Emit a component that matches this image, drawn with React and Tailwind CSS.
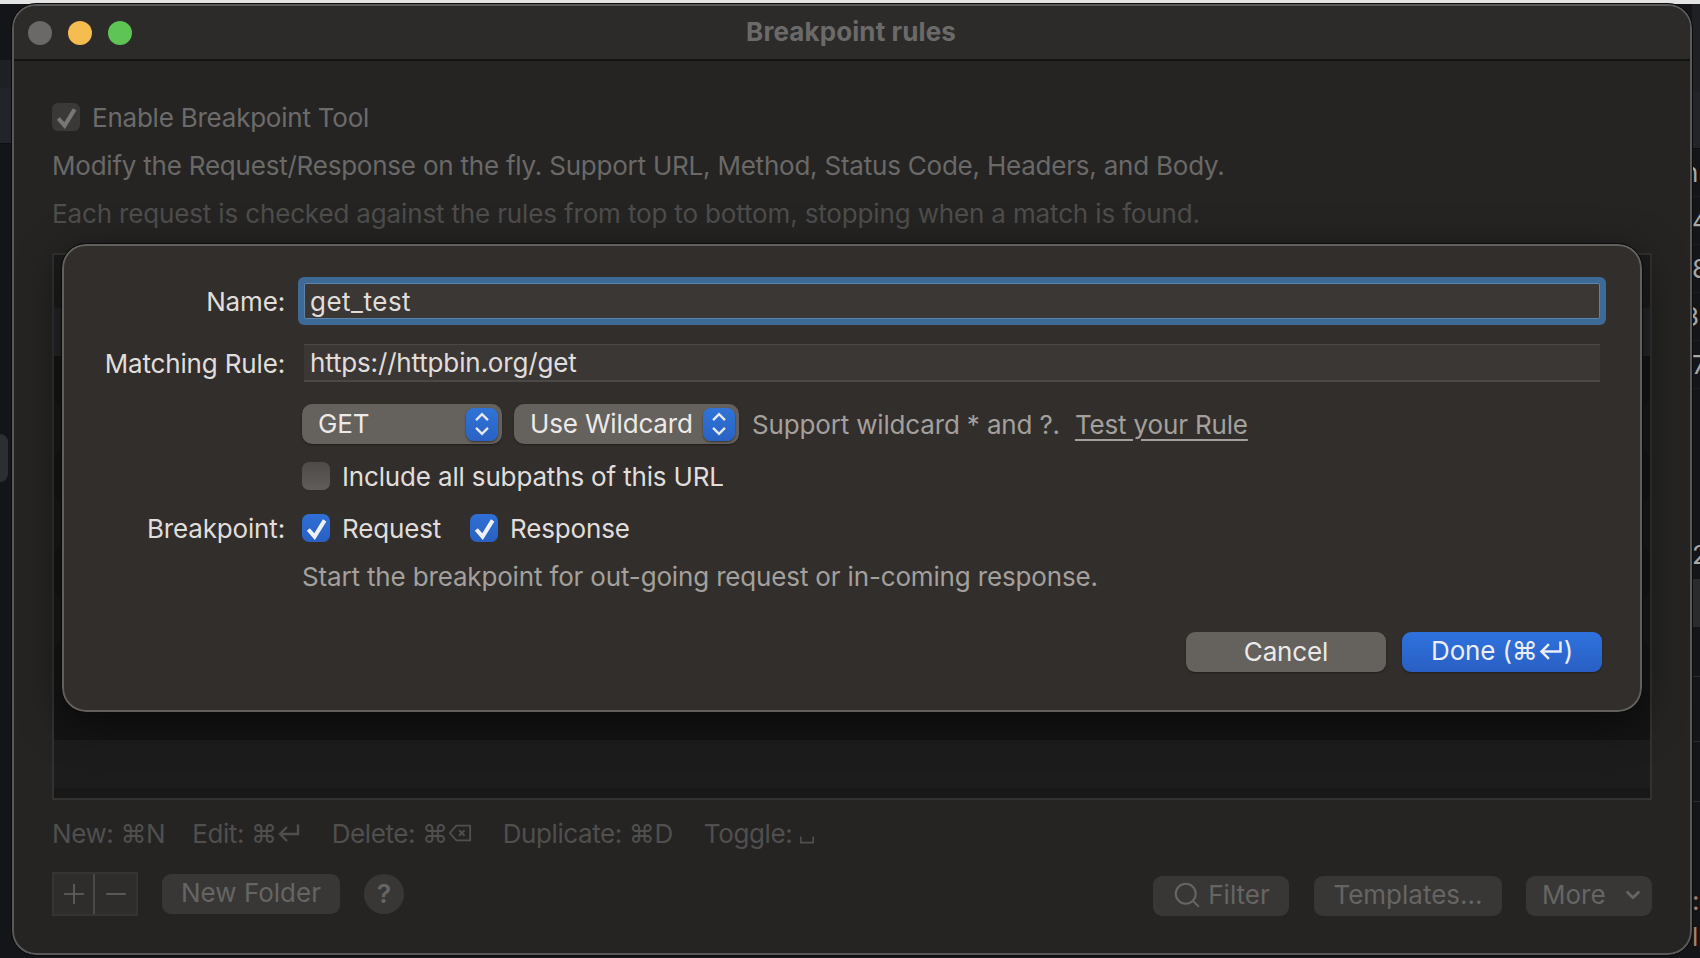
import { Search, ChevronDown, Plus, Minus } from 'lucide-react';

// Small return arrow, used in the shortcut hints and in the Done button
function ReturnKey({ className }) {
  return (
    <svg viewBox="0 0 24 20" className={className} fill="none" stroke="currentColor" strokeWidth="2.4">
      <path d="M21 1.500V11H4" />
      <path d="M10 4l-7 7 7 7" />
    </svg>
  );
}

function DeleteKey({ className }) {
  return (
    <svg viewBox="0 0 26 20" className={className} fill="none" stroke="currentColor" strokeWidth="2">
      <path d="M9 2h15v16H9L2 10z" />
      <path d="M12 7l6 6M18 7l-6 6" />
    </svg>
  );
}

function SpaceKey({ className }) {
  return (
    <svg viewBox="0 0 18 10" className={className} fill="none" stroke="currentColor" strokeWidth="2">
      <path d="M1 1v8h16V1" />
    </svg>
  );
}

// macOS style tick, taller than the lucide one
function Tick({ className }) {
  return (
    <svg viewBox="0 0 24 24" className={className} fill="none" stroke="currentColor" strokeWidth="4.2">
      <path d="M3.500 13L10 20.500L20.500 3.500" />
    </svg>
  );
}

function Arrows() {
  return (
    <span className="flex items-center justify-center w-[32px] h-[33px] rounded-[8px] bg-gradient-to-b from-[#2f74d8] to-[#2a62c4] shadow-[0_1px_2px_rgba(0,0,0,0.5)]">
      <svg viewBox="0 0 16 24" className="w-[18px] h-[26px]" fill="none" stroke="#e8e8e8" strokeWidth="2.200">
        <path d="M2.500 8.500L8 3l5.500 5.500" />
        <path d="M2.500 15.500L8 21l5.500-5.500" />
      </svg>
    </span>
  );
}

function Select({ label, className }) {
  return (
    <div className={`flex items-center justify-between h-[40px] rounded-[10px] bg-[#65615d] pl-[16px] pr-[4px] text-[#eceae8] shadow-[0_1px_2px_rgba(0,0,0,0.4)] ${className}`}>
      <span className="pb-[2px]">{label}</span>
      <Arrows />
    </div>
  );
}

function BlueCheck() {
  return (
    <span className="flex items-center justify-center w-[28px] h-[28px] rounded-[7px] bg-gradient-to-b from-[#2f6fd6] to-[#2a60c2]">
      <Tick className="w-[23px] h-[23px] text-[#eef1f6]" />
    </span>
  );
}

function Row({ label, children, className }) {
  return (
    <div className={`flex items-center ${className}`}>
      <div className="w-[221px] shrink-0 text-right text-[#e0dedc]">{label}</div>
      <div className="flex items-center flex-1 pl-[17px]">{children}</div>
    </div>
  );
}

function RuleSheet() {
  return (
    <div className="absolute left-[48px] top-[238px] w-[1580px] h-[468px] rounded-[24px] bg-[#322e2b] border-2 border-[#62605d] outline-1 outline-[#0b0b0b] shadow-[0_10px_40px_rgba(0,0,0,0.55)] text-[26px] tracking-[-0.16px] text-[#e0dedc]">
      <Row label="Name:" className="mt-[37px] h-[36px]">
        <div className="ml-[2px] w-[1296px] h-[36px] flex items-center px-[5px] bg-[#3b3734] border-[1.500px] border-[#5c84aa] ring-[6px] ring-[#3d6a96] rounded-[2px] tracking-[0.5px]">
          get_test
        </div>
      </Row>
      <Row label="Matching Rule:" className="mt-[25px] h-[38px]">
        <div className="ml-[2px] w-[1296px] h-[38px] flex items-center px-[6px] bg-[#3b3734] border-t border-b-2 border-[#4b4845]">
          https://httpbin.org/get
        </div>
      </Row>
      <Row className="mt-[22px] h-[40px]">
        <Select label="GET" className="w-[200px]" />
        <Select label="Use Wildcard" className="w-[225px] ml-[12px]" />
        <span className="ml-[13px] text-[#a3a09d]">Support wildcard * and ?.</span>
        <a className="ml-[15px] text-[#a3a09d] underline underline-offset-[5px] decoration-2">Test your Rule</a>
      </Row>
      <Row className="mt-[18px] h-[28px]">
        <span className="w-[28px] h-[28px] rounded-[7px] bg-gradient-to-b from-[#4d4a47] to-[#5f5c59]" />
        <span className="ml-[12px]">Include all subpaths of this URL</span>
      </Row>
      <Row label="Breakpoint:" className="mt-[24px] h-[28px]">
        <BlueCheck />
        <span className="ml-[12px]">Request</span>
        <span className="ml-[29px]"><BlueCheck /></span>
        <span className="ml-[12px]">Response</span>
      </Row>
      <Row className="mt-[18px] h-[32px]">
        <span className="text-[#a3a09d]">Start the breakpoint for out-going request or in-coming response.</span>
      </Row>
      <div className="flex justify-end gap-[16px] mt-[40px] pr-[38px]">
        <button className="w-[200px] h-[40px] pb-[3px] rounded-[9px] bg-[#65615d] text-[#eceae8] shadow-[0_1px_2px_rgba(0,0,0,0.4)]">Cancel</button>
        <button className="flex items-center justify-center w-[200px] h-[40px] pb-[3px] rounded-[9px] bg-gradient-to-b from-[#2f72de] to-[#295fc4] text-[#eceef3] shadow-[0_1px_2px_rgba(0,0,0,0.4)]">
          Done (⌘<ReturnKey className="w-[26px] h-[21px]" />)
        </button>
      </div>
    </div>
  );
}

function Hint({ label, children, className }) {
  return (
    <span className={`flex items-center ${className}`}>
      {label}: {children}
    </span>
  );
}

function ToolButton({ children, className }) {
  return (
    <button className={`flex items-center h-[40px] rounded-[9px] bg-[#383736] text-[#666564] ${className}`}>
      {children}
    </button>
  );
}

const rowShades = ['bg-[#242627]', 'bg-[#151616]', 'bg-[#181919]', 'bg-[#151616]', 'bg-[#181919]', 'bg-[#151616]', 'bg-[#181919]', 'bg-[#151616]', 'bg-[#141414]'];

function RulesTable() {
  return (
    <div className="mt-[16px] h-[547px] border-2 border-[#333231] bg-[#1a1a1a] flex flex-col overflow-hidden">
      <div className="h-[53px] shrink-0 bg-[#1c1c1c]" />
      {rowShades.map((shade, i) => (
        <div key={i} className={`h-[48px] shrink-0 ${shade}`} />
      ))}
      <div className="h-[48px] shrink-0 bg-[#1c1c1c]" />
      <div className="flex-1 bg-[#181818]" />
    </div>
  );
}

// Slivers of the app that sits behind the window
const rightDigits = [
  { text: 'n', indent: '-indent-[9px]' },
  { text: '4', indent: 'indent-0' },
  { text: '8', indent: 'indent-0' },
  { text: '3', indent: '-indent-[9px]' },
  { text: '7', indent: 'indent-0' },
];

export default function App() {
  return (
    <div className="w-[1700px] h-[958px] overflow-hidden bg-[#131518] font-['Inter',sans-serif]">
      <div className="h-[4px] bg-[#e4e4e4]" />
      <div className="flex h-[954px]">
        {/* Left sliver */}
        <div className="w-[12px] shrink-0 flex flex-col">
          <div className="h-[56px]" />
          <div className="h-[28px] bg-[#1e2024]" />
          <div className="h-[56px] bg-[#22242a] border-b border-[#0e0f11] text-[#8a8a8a] text-[26px] leading-[56px] -indent-[12px] overflow-hidden">t</div>
          <div className="h-[290px]" />
          <div className="w-[8px] h-[48px] rounded-r-[8px] bg-[#2d2e30]" />
        </div>

        {/* Window */}
        <div className="relative w-[1680px] h-[951px] shrink-0 rounded-[24px] border-2 border-[#5a5958] outline-1 outline-[#0b0b0b] bg-[#252423] overflow-hidden">
          <div className="flex items-center h-[55px] pl-[14px] gap-[16px] bg-[#2c2b2a] border-b-2 border-[#131312]">
            <span className="w-[24px] h-[24px] rounded-full bg-[#6a6968]" />
            <span className="w-[24px] h-[24px] rounded-full bg-[#f5bd4f]" />
            <span className="w-[24px] h-[24px] rounded-full bg-[#5ec454]" />
            <span className="flex-1 text-center -ml-[136px] pb-[3px] text-[26px] font-bold tracking-[0.1px] text-[#6b6a69]">Breakpoint rules</span>
          </div>

          <div className="px-[38px] pt-[32px] text-[26px]">
            <div className="flex items-center h-[48px] text-[#6c6b6a] tracking-[-0.23px]">
              <span className="flex items-center justify-center w-[28px] h-[28px] rounded-[6px] bg-[#3a3938]">
                <Tick className="w-[23px] h-[23px] text-[#787776]" />
              </span>
              <span className="ml-[12px]">Enable Breakpoint Tool</span>
            </div>
            <div className="flex items-center h-[48px] text-[#6a6968] tracking-[-0.22px]">
              Modify the Request/Response on the fly. Support URL, Method, Status Code, Headers, and Body.
            </div>
            <div className="flex items-center h-[48px] text-[#4e4d4c] tracking-[-0.15px]">
              Each request is checked against the rules from top to bottom, stopping when a match is found.
            </div>

            <RulesTable />

            <div className="flex items-center h-[48px] mt-[9px] text-[#504f4e] tracking-[-0.4px]">
              <Hint label="New">⌘N</Hint>
              <Hint label="Edit" className="ml-[27px]">⌘<ReturnKey className="w-[24px] h-[20px]" /></Hint>
              <Hint label="Delete" className="ml-[31px]">⌘<DeleteKey className="w-[24px] h-[20px]" /></Hint>
              <Hint label="Duplicate" className="ml-[31px]">⌘D</Hint>
              <Hint label="Toggle" className="ml-[31px]"><SpaceKey className="w-[14px] h-[9px] ml-[8px] mt-[12px]" /></Hint>
            </div>

            <div className="flex items-center h-[44px] mt-[15px] text-[#666564]">
              <div className="flex h-[44px] border-2 border-[#353433] bg-[#2e2d2c]">
                <span className="flex items-center justify-center w-[41px] border-r-2 border-[#4a4948]">
                  <Plus className="w-[32px] h-[32px]" strokeWidth={1.2} />
                </span>
                <span className="flex items-center justify-center w-[41px]">
                  <Minus className="w-[32px] h-[32px]" strokeWidth={1.2} />
                </span>
              </div>
              <ToolButton className="ml-[24px] w-[178px] justify-center pb-[3px]">New Folder</ToolButton>
              <ToolButton className="ml-[24px] w-[40px] justify-center rounded-full font-semibold pb-[2px]">?</ToolButton>

              <ToolButton className="ml-auto mt-[4px] w-[136px] justify-center gap-[6px] pb-[3px]">
                <Search className="w-[30px] h-[30px]" strokeWidth={1.6} />
                Filter
              </ToolButton>
              <ToolButton className="ml-[25px] mt-[4px] w-[188px] justify-center pb-[3px]">Templates...</ToolButton>
              <ToolButton className="ml-[24px] mt-[4px] w-[126px] justify-between pl-[16px] pr-[8px] pb-[3px]">
                More
                <ChevronDown className="w-[22px] h-[22px]" strokeWidth={3} />
              </ToolButton>
            </div>
          </div>

          <RuleSheet />
        </div>

        {/* Right sliver */}
        <div className="w-[8px] shrink-0 flex flex-col overflow-hidden text-[26px] text-[#a8a8a8]">
          <div className="h-[88px] bg-[#1e2024]" />
          <div className="h-[57px] bg-[#22242a] border-b border-[#0e0f11]" />
          {rightDigits.map((d) => (
            <div key={d.text} className={`h-[48px] shrink-0 leading-[48px] border-b border-[#1d1f22] ${d.indent}`}>{d.text}</div>
          ))}
          <div className="h-[142px] shrink-0" />
          <div className="h-[48px] shrink-0 leading-[48px]">2</div>
          <div className="h-[48px] shrink-0 bg-[#2a2b2c]" />
          <div className="h-[50px] shrink-0 border-b border-[#2a2b2d]" />
          <div className="h-[65px] shrink-0 border-b border-[#2a2b2d]" />
          <div className="h-[60px] shrink-0 border-b border-[#2a2b2d]" />
          <div className="h-[73px] shrink-0" />
          <div className="h-[52px] shrink-0 leading-[52px] text-[#b07f66]">:c</div>
          <div className="h-[20px] shrink-0 leading-[20px] text-[#b07f66]">ll</div>
        </div>
      </div>
    </div>
  );
}
